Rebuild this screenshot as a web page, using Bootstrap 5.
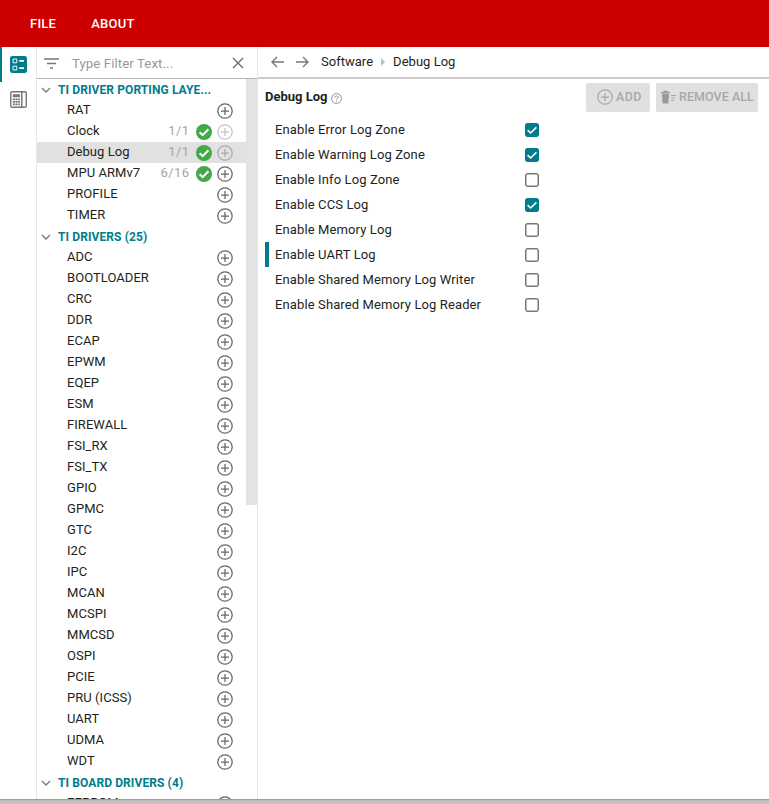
<!DOCTYPE html>
<html><head><meta charset="utf-8">
<link href="https://cdn.jsdelivr.net/npm/bootstrap@5.3.0/dist/css/bootstrap.min.css" rel="stylesheet">
<style>
html,body{margin:0;height:804px;overflow:hidden;background:#fff}
body{font-family:Roboto,"Liberation Sans",sans-serif;font-size:13px;color:#231f20}
.shell{height:804px}
.topbar{height:47px;background:#c00;color:#fff;font-weight:500;font-size:13px;letter-spacing:.25px;padding-left:30px;gap:35px;flex:none}
.workspace{flex:1 1 0;min-height:0}
.rail{width:37px;flex:none;border-right:1px solid #e8e8e8}
.railbtn{height:35px;width:36px;padding-left:10px}
.railbtn.on{box-shadow:inset 2px 0 0 #007c8c}
.railbtn svg{display:block}
.sidepane{width:221px;flex:none;border-right:1px solid #e6e6e6}
.filterbar{height:32px;border-bottom:1px solid #b5b5b5;flex:none;padding-left:7px;padding-top:1px}
.filterph{color:#999;font-size:13.2px;letter-spacing:.1px;margin-left:13px;flex:1;padding-top:1px}
.closeicon{margin-right:13px}
.treewrap{flex:1 1 0;min-height:0}
.treelist{flex:1 1 0;min-width:0;overflow:hidden}
.scrolltrack{width:11px;flex:none}
.scrollthumb{height:426px;background:#e3e3e3}
.groupline{height:21px;padding-left:4px;color:#007c8c;font-weight:700;font-size:12px;letter-spacing:.1px}
.groupline svg{margin-right:7px;flex:none}
.groupline span{padding-top:1px}
.itemline{height:21px;padding-left:30px;padding-right:13.5px;font-size:13px;letter-spacing:.05px}
.itemline.sel{background:#e1e1e1}
.itemname{flex:1;padding-bottom:2px}
.itemcount{color:#a5a5a5;margin-right:6px;letter-spacing:.4px;padding-bottom:2px}
.okmark{margin-right:5px;flex:none}
.plusicon{flex:none;color:#666}
.plusicon.dim{color:#c4c4c4}
.itemline.sel .plusicon.dim{color:#aaa}
.mainpane{flex:1 1 0;min-width:0}
.crumbbar{height:32px;border-bottom:2px solid #ccc;flex:none;padding-left:12px;font-size:13px;letter-spacing:.02px}
.crumbbar svg{flex:none}
.arrowfwd{margin-left:10px;margin-right:11px}
.sep{margin:0 8px;width:0;height:0;border-left:4px solid #bbb;border-top:4px solid transparent;border-bottom:4px solid transparent}
.confighead{height:36px;padding:0 11px 0 7px;flex:none}
.configtitle{font-weight:700;font-size:13px}
.helpicon{margin-left:3px;margin-top:2px;flex:none}
.greybtn{height:29px;background:#e0e0e0;color:#a8a8a8;font-weight:500;font-size:12.5px;letter-spacing:.35px;border-radius:2px;border:0;padding:0 0 0 11px;display:flex;align-items:center;justify-content:flex-start}
.addbtn{width:64px;margin-right:6px}
.addbtn svg{margin-right:3px;flex:none}
.removebtn{width:102px;padding-left:4px;letter-spacing:.05px}
.removebtn svg{margin-right:1px;flex:none}
.optlist{padding-top:2px;padding-left:7px}
.optline{height:25px;padding-left:10px;font-size:13px;letter-spacing:.12px;width:274px}
.optline span{flex:1}
.optline.uartmark{box-shadow:inset 4px 0 0 #007c8c}
.tick{width:14px;height:14px;border-radius:2px;display:block;flex:none}
.windowedge{height:5px;flex:none;background:linear-gradient(#8d8d8d,#bdbdbd 30%,#c6c6c6)}
</style></head><body>
<svg width="0" height="0" class="position-absolute">
<defs>
<symbol id="plus" viewBox="0 0 16 16"><circle cx="8" cy="8" r="7.2" fill="none" stroke="currentColor" stroke-width="1.25"/><path d="M8 4v8M4 8h8" stroke="currentColor" stroke-width="1.25" fill="none"/></symbol>
<symbol id="ok" viewBox="0 0 16 16"><circle cx="8" cy="8" r="8" fill="#43a849"/><path d="M3.6 8.2l3.1 3 5.7-5.9" fill="none" stroke="#fff" stroke-width="2"/></symbol>
<symbol id="chev" viewBox="0 0 10 6"><path d="M1 1l4 4 4-4" fill="none" stroke="#777" stroke-width="1.3"/></symbol>
<symbol id="box-on" viewBox="0 0 14 14"><rect width="14" height="14" rx="2" fill="#007c8c"/><path d="M2.6 7.2l3 2.8 5.8-5.6" fill="none" stroke="#fff" stroke-width="1.6"/></symbol>
<symbol id="box-off" viewBox="0 0 14 14"><rect x=".75" y=".75" width="12.5" height="12.5" rx="1.5" fill="#fff" stroke="#777" stroke-width="1.5"/></symbol>
</defs>
</svg>
<div class="shell d-flex flex-column">
<div class="topbar d-flex align-items-center"><span>FILE</span><span>ABOUT</span></div>
<div class="workspace d-flex">
<div class="rail">
<div class="railbtn on d-flex align-items-center"><svg width="17" height="17" viewBox="0 0 18 18"><rect width="18" height="18" rx="2.5" fill="#007c8c"/><path d="M3.2 3.2h4v4h-4zM3.2 10.8h4v4h-4z" fill="none" stroke="#fff" stroke-width="1"/><path d="M9.8 5.2h5M9.8 12.8h5" stroke="#fff" stroke-width="1.7"/></svg></div>
<div class="railbtn d-flex align-items-center"><svg width="17" height="17" viewBox="0 0 18 18"><rect x=".8" y=".8" width="16.4" height="16.4" rx="1.4" fill="none" stroke="#777" stroke-width="1.5"/><path d="M12.5 1v16" stroke="#777" stroke-width="1.6"/><path d="M3 3.5h7.5v3H3zM3 8h2.2v1.8H3zM5.8 8H8v1.8H5.8zM8.6 8h1.9v1.8H8.6zM3 10.7h2.2v1.8H3zM5.8 10.7H8v1.8H5.8zM8.6 10.7h1.9v1.8H8.6zM3 13.3h2.2v1.8H3zM5.8 13.3H8v1.8H5.8zM8.6 13.3h1.9v1.8H8.6z" fill="#777"/></svg></div>
</div>
<div class="sidepane d-flex flex-column">
<div class="filterbar d-flex align-items-center">
<svg width="15" height="11" viewBox="0 0 15 11"><path d="M0 1h15M3 5.5h9M6 10h3" stroke="#777" stroke-width="1.3"/></svg>
<span class="filterph">Type Filter Text...</span>
<svg class="closeicon" width="12" height="12" viewBox="0 0 12 12"><path d="M1 1l10 10M11 1L1 11" stroke="#666" stroke-width="1.3"/></svg>
</div>
<div class="treewrap d-flex">
<div class="treelist" id="tree"></div>
<div class="scrolltrack"><div class="scrollthumb"></div></div>
</div>
</div>
<div class="mainpane d-flex flex-column">
<div class="crumbbar d-flex align-items-center">
<svg width="15" height="12" viewBox="0 0 15 12"><path d="M14 6H2M7 1L2 6l5 5" fill="none" stroke="#777" stroke-width="1.4"/></svg>
<svg class="arrowfwd" width="15" height="12" viewBox="0 0 15 12"><path d="M1 6h12M8 1l5 5-5 5" fill="none" stroke="#777" stroke-width="1.4"/></svg>
<span>Software</span><i class="sep"></i><span>Debug Log</span>
</div>
<div class="confighead d-flex align-items-center">
<span class="configtitle">Debug Log</span>
<svg class="helpicon" width="11" height="11" viewBox="0 0 10 10"><circle cx="5" cy="5" r="4.5" fill="none" stroke="#888" stroke-width=".8"/><path d="M3.5 4a1.5 1.3 0 1 1 2.2 1.1c-.5.3-.7.5-.7 1" fill="none" stroke="#888" stroke-width=".8"/><circle cx="5" cy="7.6" r=".5" fill="#888"/></svg>
<div class="flex-grow-1"></div>
<button class="greybtn addbtn" type="button"><svg width="16" height="16" viewBox="0 0 16 16" color="#a8a8a8"><use href="#plus"/></svg>ADD</button>
<button class="greybtn removebtn" type="button"><svg width="18" height="14" viewBox="0 0 18 14"><path d="M1 2h9v1.2H1zM3.5 .8h4V2h-4zM2 3.8h7l-.6 9.7H2.6z" fill="#999"/><path d="M11 5.5h5M11 8h4M11 10.5h3" stroke="#a8a8a8" stroke-width="1"/></svg>REMOVE ALL</button>
</div>
<div class="optlist" id="opts"></div>
</div>
</div>
<div class="windowedge"></div>
</div>
<script>
const tree=[['g','TI DRIVER PORTING LAYE...'],['RAT'],['Clock','1/1',1,1],['Debug Log','1/1',1,1,1],['MPU ARMv7','6/16',1],['PROFILE'],['TIMER'],['g','TI DRIVERS (25)'],
...'ADC BOOTLOADER CRC DDR ECAP EPWM EQEP ESM FIREWALL FSI_RX FSI_TX GPIO GPMC GTC I2C IPC MCAN MCSPI MMCSD OSPI PCIE'.split(' ').map(x=>[x]),['PRU (ICSS)'],['UART'],['UDMA'],['WDT'],['g','TI BOARD DRIVERS (4)'],['EEPROM']];
document.getElementById('tree').innerHTML=tree.map(r=>{
 if(r[0]==='g')return `<div class="groupline d-flex align-items-center"><svg width="10" height="6"><use href="#chev"/></svg><span>${r[1]}</span></div>`;
 return `<div class="itemline d-flex align-items-center${r[4]?' sel':''}"><span class="itemname">${r[0]}</span>${r[1]?`<span class="itemcount">${r[1]}</span>`:''}${r[2]?'<svg class="okmark" width="16" height="16"><use href="#ok"/></svg>':''}<svg class="plusicon${r[3]?' dim':''}" width="16" height="16"><use href="#plus"/></svg></div>`}).join('');
const o=[['Enable Error Log Zone',1],['Enable Warning Log Zone',1],['Enable Info Log Zone',0],['Enable CCS Log',1],['Enable Memory Log',0],['Enable UART Log',0,1],['Enable Shared Memory Log Writer',0],['Enable Shared Memory Log Reader',0]];
document.getElementById('opts').innerHTML=o.map(r=>`<div class="optline d-flex align-items-center${r[2]?' uartmark':''}"><span>${r[0]}</span><svg class="tick" width="14" height="14"><use href="#${r[1]?'box-on':'box-off'}"/></svg></div>`).join('');
</script>
<script src="https://cdn.jsdelivr.net/npm/bootstrap@5.3.0/dist/js/bootstrap.bundle.min.js"></script>
</body></html>
